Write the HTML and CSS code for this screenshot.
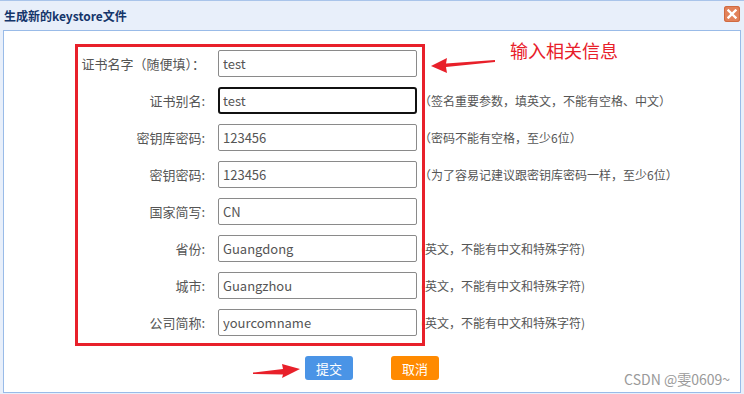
FILE: index.html
```html
<!DOCTYPE html>
<html lang="zh-CN">
<head>
    <meta charset="UTF-8">
    <title>生成新的keystore文件</title>
    <link rel="stylesheet" href="styles.css">
</head>
<body>
    <div class="window">
        <div class="titlebar">
            <span class="title">生成新的keystore文件</span>
            <span class="close">
                <svg width="10" height="10" viewBox="0 0 10 10"><path d="M1.5 1.5 L8.5 8.5 M8.5 1.5 L1.5 8.5" stroke="#fff" stroke-width="2.4" stroke-linecap="square"/></svg>
            </span>
        </div>
        <div class="panel">
            <form class="form">
                <div class="row">
                    <label>证书名字（随便填）：</label>
                    <input class="field" type="text" value="test">
                    <span class="hint"></span>
                </div>
                <div class="row">
                    <label>证书别名:</label>
                    <input class="field focused" type="text" value="test">
                    <span class="hint">（签名重要参数，填英文，不能有空格、中文）</span>
                </div>
                <div class="row">
                    <label>密钥库密码:</label>
                    <input class="field" type="text" value="123456">
                    <span class="hint">（密码不能有空格，至少6位）</span>
                </div>
                <div class="row">
                    <label>密钥密码:</label>
                    <input class="field" type="text" value="123456">
                    <span class="hint">（为了容易记建议跟密钥库密码一样，至少6位）</span>
                </div>
                <div class="row">
                    <label>国家简写:</label>
                    <input class="field" type="text" value="CN">
                    <span class="hint"></span>
                </div>
                <div class="row">
                    <label>省份:</label>
                    <input class="field" type="text" value="Guangdong">
                    <span class="hint narrow">(英文，不能有中文和特殊字符)</span>
                </div>
                <div class="row">
                    <label>城市:</label>
                    <input class="field" type="text" value="Guangzhou">
                    <span class="hint narrow">(英文，不能有中文和特殊字符)</span>
                </div>
                <div class="row">
                    <label>公司简称:</label>
                    <input class="field" type="text" value="yourcomname">
                    <span class="hint narrow">(英文，不能有中文和特殊字符)</span>
                </div>
            </form>
            <div class="actions">
                <button class="btn btn-submit" type="button">提交</button>
                <button class="btn btn-cancel" type="button">取消</button>
            </div>

            <!-- annotations drawn over the screenshot -->
            <div class="mark-box"></div>
            <div class="mark-text">输入相关信息</div>
            <svg class="mark-arrow top" width="70" height="20" viewBox="0 0 70 20">
                <polygon points="0,13 16,5 15,10.5 64,7 64,9 15,14 16,20" fill="#e8202a"/>
            </svg>
            <svg class="mark-arrow bottom" width="50" height="16" viewBox="0 0 50 16">
                <polygon points="47,5 29,0 30,5 0,8.5 0,10 30,10.5 29,14" fill="#e8202a"/>
            </svg>
            <div class="watermark">CSDN @雯0609~</div>
        </div>
    </div>
</body>
</html>
```
FILE: styles.css
```css
body {
    margin: 0;
    font-family: "Noto Sans CJK SC", "Noto Sans", sans-serif;
    background-color: #fff;
}
.window {
    width: 744px;
    height: 394px;
    box-sizing: border-box;
    background-color: #e8effa;
    border-top: 1px solid #a9c4ea;
    display: flex;
    flex-direction: column;
}
.titlebar {
    height: 29px;
    display: flex;
    align-items: center;
    justify-content: space-between;
    padding: 0 4px 0 4px;
}
.title {
    font-size: 12px;
    font-weight: bold;
    color: #15356a;
}
.close {
    width: 16px;
    height: 16px;
    border-radius: 3px;
    background-color: #e2825a;
    box-shadow: inset 0 0 0 1px #d06a40;
    display: flex;
    align-items: center;
    justify-content: center;
    margin-top: -3px;
}
.panel {
    position: relative;
    flex: 1;
    margin: 0 3px 1px 3px;
    background-color: #fff;
    border: 1px solid #99bbe8;
}
.form {
    padding: 19px 0 0 71px;
    display: flex;
    flex-direction: column;
    gap: 10px;
    margin: 0;
}
.row {
    display: flex;
    align-items: center;
    height: 27px;
}
.row label {
    width: 130px;
    text-align: right;
    font-size: 13px;
    color: #555;
    margin-right: 13px;
    white-space: nowrap;
}
.field {
    width: 199px;
    height: 27px;
    box-sizing: border-box;
    border: 1px solid #8a8a8a;
    border-radius: 2px;
    padding: 0 4px;
    font-family: "Noto Sans CJK SC", "Noto Sans", sans-serif;
    font-size: 13px;
    color: #555;
    outline: none;
}
.field.focused {
    border: 2px solid #111;
    border-radius: 3px;
    padding: 0 3px;
}
.hint {
    font-size: 12px;
    color: #555;
    white-space: nowrap;
    margin-left: 2px;
}
.hint.narrow {
    margin-left: 4px;
}
.actions {
    display: flex;
    justify-content: center;
    gap: 38px;
    margin-top: 20px;
}
.btn {
    width: 48px;
    height: 24px;
    border: none;
    border-radius: 3px;
    color: #fff;
    font-family: "Noto Sans CJK SC", sans-serif;
    font-size: 13px;
    padding: 0;
}
.btn-submit {
    background-color: #4a94e6;
}
.btn-cancel {
    background-color: #ff8a00;
}
.mark-box {
    position: absolute;
    left: 71px;
    top: 13px;
    width: 350px;
    height: 302px;
    box-sizing: border-box;
    border: 3px solid #e8202a;
}
.mark-text {
    position: absolute;
    left: 506px;
    top: 6px;
    font-size: 18px;
    color: #e8202a;
}
.mark-arrow {
    position: absolute;
}
.mark-arrow.top {
    left: 427px;
    top: 22px;
}
.mark-arrow.bottom {
    left: 249px;
    top: 333px;
}
.watermark {
    position: absolute;
    right: 10px;
    bottom: 3px;
    font-size: 14px;
    color: #9a9a9a;
}
```
